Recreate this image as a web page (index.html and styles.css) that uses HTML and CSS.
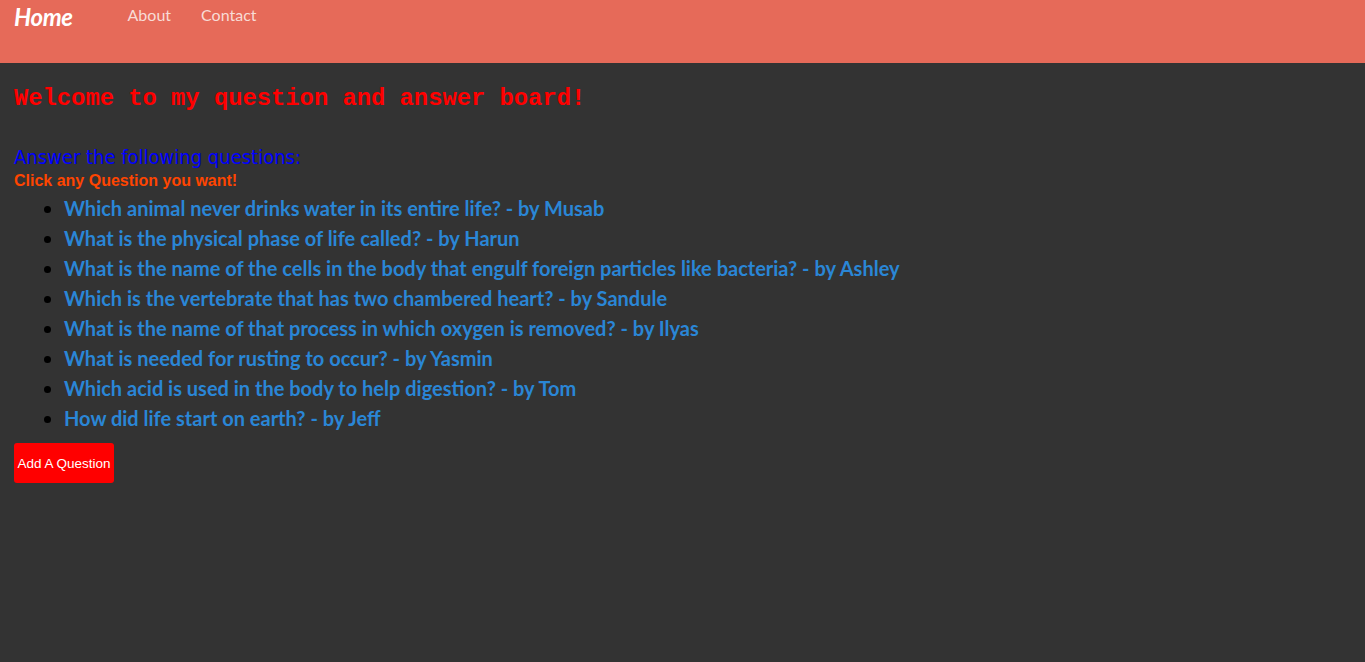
FILE: index.html
```html
<!DOCTYPE html>
<html>
<head>
<meta charset="utf-8">
<link rel="stylesheet" href="styles.css">
</head>
<body>
<header class="topbar">
  <a class="brand" href="#">Home</a>
  <nav class="nav">
    <a href="#">About</a>
    <a href="#">Contact</a>
  </nav>
</header>
<main class="content">
  <h1 class="title">Welcome to my question and answer board!</h1>
  <h3 class="prompt">Answer the following questions:</h3>
  <p class="hint">Click any Question you want!</p>
  <ul class="questions">
    <li><a href="#">Which animal never drinks water in its entire life? - by Musab</a></li>
    <li><a href="#">What is the physical phase of life called? - by Harun</a></li>
    <li><a href="#">What is the name of the cells in the body that engulf foreign particles like bacteria? - by Ashley</a></li>
    <li><a href="#">Which is the vertebrate that has two chambered heart? - by Sandule</a></li>
    <li><a href="#">What is the name of that process in which oxygen is removed? - by Ilyas</a></li>
    <li><a href="#">What is needed for rusting to occur? - by Yasmin</a></li>
    <li><a href="#">Which acid is used in the body to help digestion? - by Tom</a></li>
    <li><a href="#">How did life start on earth? - by Jeff</a></li>
  </ul>
  <button class="add-btn">Add A Question</button>
</main>
</body>
</html>
```
FILE: styles.css
```css
html, body {
  margin: 0;
  padding: 0;
  background: #333333;
  height: 100%;
}
body {
  font-family: Lato, "Liberation Sans", sans-serif;
}
.topbar {
  height: 63px;
  background: #e66a59;
  display: flex;
  align-items: flex-start;
  padding: 0 14px;
  box-sizing: border-box;
}
.brand {
  color: #ffffff;
  font-weight: 700;
  font-style: italic;
  font-size: 24px;
  text-decoration: none;
  line-height: 34px;
  letter-spacing: -0.4px;
}
.nav {
  display: flex;
  gap: 30px;
  margin-left: 55px;
}
.nav a {
  color: #f8dcd6;
  text-decoration: none;
  font-size: 16px;
  line-height: 30px;
}
.content {
  padding: 0 14px;
}
.title {
  margin: 0;
  padding-top: 22px;
  font-family: "Liberation Mono", monospace;
  font-size: 23.8px;
  font-weight: 700;
  color: #ff0000;
  line-height: 28px;
}
.prompt {
  margin: 31px 0 0;
  font-family: "DejaVu Sans Condensed", "DejaVu Sans", sans-serif;
  font-weight: 400;
  font-size: 20px;
  line-height: 26px;
  color: #0000ff;
}
.hint {
  margin: 1px 0 0;
  font-family: "Liberation Sans", Arial, sans-serif;
  font-weight: 700;
  font-size: 16px;
  line-height: 20px;
  color: #ff4500;
}
.questions {
  margin: 2px 0 0;
  padding-left: 50px;
}
.questions li {
  color: #000;
  font-size: 20px;
  line-height: 30px;
  font-weight: 700;
}
.questions a {
  color: #2a86d6;
  text-decoration: none;
}
.add-btn {
  display: block;
  margin-top: 10px;
  width: 100px;
  height: 40px;
  background: #ff0000;
  color: #ffffff;
  border: none;
  border-radius: 3px;
  font-family: "Liberation Sans", Arial, sans-serif;
  font-size: 13.5px;
  padding: 0;
}
```
